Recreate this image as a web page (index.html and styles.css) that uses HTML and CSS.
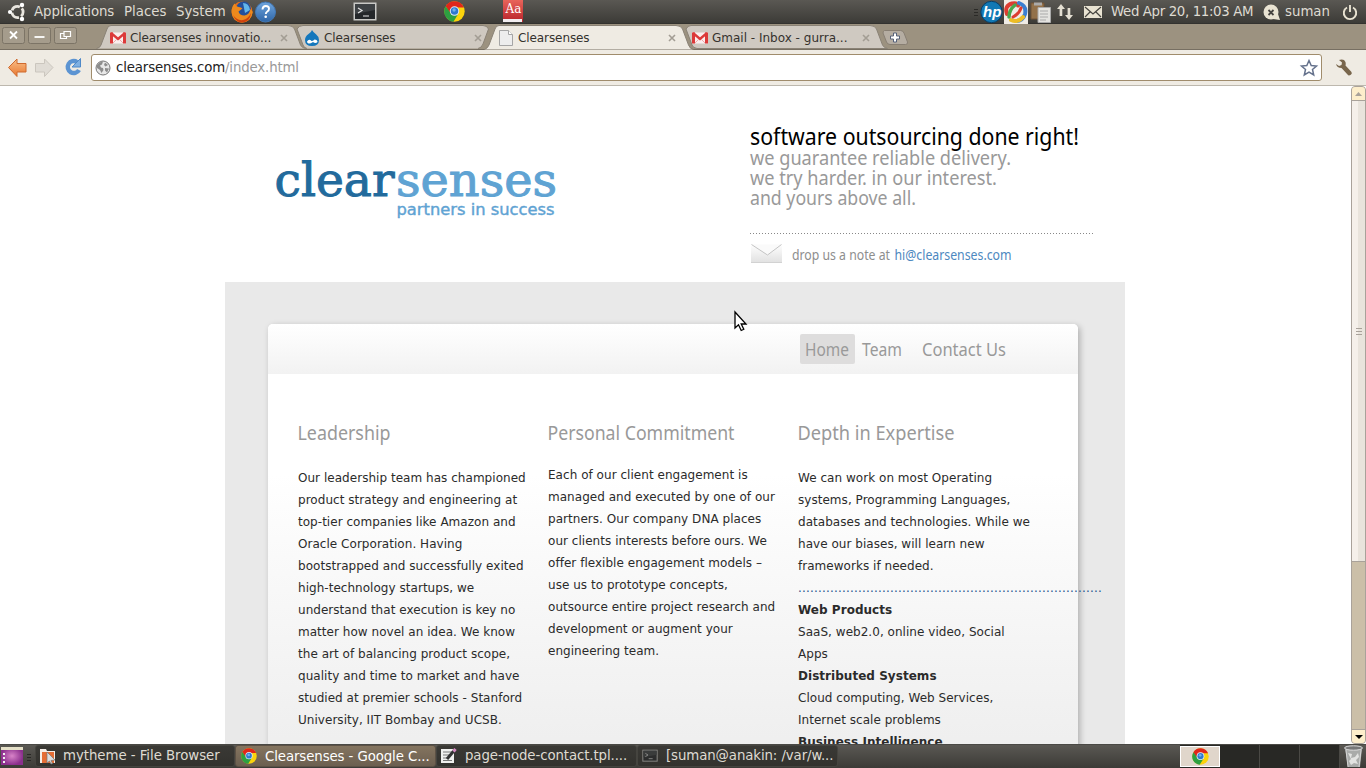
FILE: index.html
```html
<!DOCTYPE html>
<html lang="en">
<head>
<meta charset="utf-8">
<title>Clearsenses</title>
<link rel="stylesheet" href="styles.css">
</head>
<body>
<svg class="defs" width="0" height="0">
  <defs>
    <linearGradient id="or" x1="0" y1="0" x2="0" y2="1"><stop offset="0" stop-color="#f9c08a"/><stop offset="1" stop-color="#e8772e"/></linearGradient>
    <linearGradient id="bl" x1="0" y1="0" x2="0" y2="1"><stop offset="0" stop-color="#6fa5dd"/><stop offset="1" stop-color="#2f66a8"/></linearGradient>
    <linearGradient id="rd" x1="0" y1="0" x2="0" y2="1"><stop offset="0" stop-color="#e8645a"/><stop offset="1" stop-color="#b8232b"/></linearGradient>
    <linearGradient id="env" x1="0" y1="0" x2="0" y2="1"><stop offset="0" stop-color="#fff"/><stop offset="1" stop-color="#e2e2e2"/></linearGradient>
    <radialGradient id="pu"><stop offset="0" stop-color="#d883c8"/><stop offset="1" stop-color="#8b2f8d"/></radialGradient>
    <symbol id="chrome" viewBox="0 0 20 20">
      <circle cx="10" cy="10" r="9.7" fill="#fbd30c"/>
      <path d="M1.6 5A9.7 9.7 0 0 1 18.9 6.2H10L5.800 12z" fill="#e0261b"/>
      <path d="M1.600 5A9.700 9.700 0 0 0 9 19.700L13.500 12.500 6 11z" fill="#2da041"/>
      <circle cx="10" cy="9.600" r="4.500" fill="#e9eef5"/><circle cx="10" cy="9.600" r="3.600" fill="#2f78cf"/><circle cx="9.600" cy="8.600" r="1.600" fill="#6fb0ee"/>
    </symbol>
    <symbol id="gmail" viewBox="0 0 16 12">
      <path d="M0 .5h16v11H0z" fill="#fbeeee"/><path d="M0 .5h3v11H0zM13 .5h3v11h-3z" fill="#dc3a3a"/>
      <path d="M1 1l7 6 7-6" fill="none" stroke="#dc3a3a" stroke-width="2.400"/><path d="M3 11l4-4M13 11L9 7" stroke="#eaa" fill="none"/>
    </symbol>
    <symbol id="x" viewBox="0 0 8 8"><path d="M1 1l6 6M7 1L1 7" stroke="#a39d94" stroke-width="1.600" fill="none"/></symbol>
    <symbol id="term" viewBox="0 0 24 20">
      <path d="M.5.500h23v18H.5z" fill="#c9c9c6"/><path d="M2 2h20v15H2z" fill="#24272a"/><path d="M2 2h20v6L2 12z" fill="#3d4144"/>
      <path d="M5 6l4 2.500L5 11M10 14h6" fill="none" stroke="#e5e5e5" stroke-width="1.200"/>
    </symbol>
  </defs>
</svg>

<div class="desktop">
  <div class="panel">
    <svg class="ico" width="34" height="24" viewBox="0 0 34 24">
      <circle cx="17.500" cy="12" r="5.600" fill="none" stroke="#e9e6df" stroke-width="2.800" stroke-dasharray="9.400 2.330" stroke-dashoffset="4.700"/>
      <circle cx="10" cy="12" r="2.100" fill="#fff"/><circle cx="22" cy="5" r="2.200" fill="#fff"/><circle cx="22" cy="19" r="2.200" fill="#fff"/>
    </svg>
    <span class="menu m1">Applications</span><span class="menu m2">Places</span><span class="menu m3">System</span>
    <svg class="ico launch" width="48" height="24" viewBox="0 0 48 24">
      <circle cx="12" cy="12" r="10.500" fill="#e4701a"/><circle cx="13.500" cy="9" r="7.500" fill="#244f9a"/><path d="M13 3q6 0 7 7l-5 3z" fill="#62b6ea"/>
      <path d="M1.500 10Q2 6 4.500 3.500q1 3 4 3.500 3 0 4 1.500l-4 3q1 4 6 4 5-1 6-6.500l2.300 3Q21 22 12 22.600 2 22 1.500 10z" fill="#ee8a1d"/><path d="M3 15q4 6 10 5 5-1 8-7-1 9-9 9.500-6 0-9-7.500z" fill="#cf4210"/>
      <circle cx="35.500" cy="12" r="10" fill="url(#bl)" stroke="#4278b5"/><path d="M32.500 9.500q0-3.500 3.300-3.500 3.200 0 3.200 2.800 0 1.700-1.700 2.700-1.500.9-1.500 2.500" fill="none" stroke="#fff" stroke-width="1.900"/><circle cx="35.700" cy="16.800" r="1.300" fill="#fff"/>
    </svg>
    <svg class="ico l2" width="24" height="20"><use href="#term"/></svg>
    <svg class="ico l3" width="21" height="21"><use href="#chrome"/></svg>
    <svg class="ico l4" width="22" height="24" viewBox="0 0 22 24"><path d="M1 0h20v22H1z" fill="url(#rd)"/><path d="M1 19h19v3H1z" fill="#f3eef0"/><text x="3.500" y="13" class="aa">Aa</text></svg>
    <svg class="ico tray" width="144" height="24" viewBox="0 0 144 24">
      <path d="M1 9.500h4M1 12.500h4M1 15.500h4" stroke="#2b2a27"/>
      <circle cx="18.500" cy="12" r="10.700" fill="#1279b5" stroke="#093f68"/><text x="10" y="17" class="hp">hp</text>
      <path d="M31 0h24v24H31z" fill="#f0ece5"/>
      <g fill="none" stroke-linecap="round"><path d="M34 14Q31 6 39 3.500q5-1 6 2" stroke="#dc3d31" stroke-width="4"/><path d="M46 3q8 3 6 11-2 7-9 7" stroke="#3b7fd1" stroke-width="4"/><path d="M50 17q-5 6-12 3" stroke="#edbd26" stroke-width="4"/><path d="M36 17q0-7 6-12" stroke="#4aa74c" stroke-width="3.500"/><path d="M40 17q6-3 8-9" stroke="#dc3d31" stroke-width="3"/></g>
      <path d="M58 3h13v16H58z" fill="#93714a" stroke="#6f5336"/><path d="M61 2.500h8v3h-8z" fill="#aaa"/><path d="M65 7.500h12.500v15H65z" fill="#e4e3e0" stroke="#aaa"/><path d="M67 11h8M67 14h8M67 17h8M67 20h6" stroke="#aaa"/>
      <path d="M84 9l4-5 4 5h-2.700v7h-2.700V9zM92 15l4 5 4-5h-2.700V8h-2.700v7z" fill="#e4dfd2"/>
      <path d="M111 6h18v12h-18z" fill="#e9e3d2"/><path d="M112 7l8 7 8-7M112 17l5-5M128 17l-5-5" fill="none" stroke="#46443f" stroke-width="1.200"/>
    </svg>
    <span class="menu clock">Wed Apr 20, 11:03 AM</span>
    <svg class="ico" width="18" height="18" viewBox="0 0 18 18"><circle cx="8" cy="9" r="7.500" fill="#e9e3d2"/><path d="M10 16l7 1-2-6z" fill="#e9e3d2"/><path d="M5.500 7l5 5M10.500 7l-5 5" stroke="#45433f" stroke-width="1.800"/></svg>
    <span class="menu user">suman</span>
    <svg class="ico power" width="16" height="18" viewBox="0 0 16 18"><path d="M5 4.500a6.200 6.200 0 1 0 6 0M8 2v7" fill="none" stroke="#e9e3d2" stroke-width="1.900"/></svg>
  </div>

  <div class="tabs">
    <div class="wins">
      <svg width="23" height="17"><rect class="wb" x=".5" y=".5" width="22" height="16" rx="2"/><path d="M8 4.500l7 7M15 4.500l-7 7" class="wi"/></svg>
      <svg width="23" height="17"><rect class="wb" x=".5" y=".5" width="22" height="16" rx="2"/><path d="M6.500 10h10" class="wi"/></svg>
      <svg width="23" height="17"><rect class="wb" x=".5" y=".5" width="22" height="16" rx="2"/><path d="M10 4.500h6.500v5H10zM10 6.500H6.500v5h6v-2" class="wi thin"/></svg>
    </div>
    <div class="tab t1"><svg class="bg" width="206" height="25"><path d="M.5 24.500Q4 24 5 21L11 5Q12 1.500 15 1.500H192Q197 1.500 198.500 5l6 16q1.500 3 5 3.500"/></svg>
      <svg width="16" height="12"><use href="#gmail"/></svg><span>Clearsenses innovatio...</span><svg class="cl" width="8" height="8"><use href="#x"/></svg></div>
    <div class="tab t2"><svg class="bg" width="206" height="25"><path d="M17 24.500Q14 24 13 21L7 5Q9 1.500 13 1.500H193Q197 1.500 198.500 5L193 20q-1.500 4-5 4.500"/></svg>
      <svg width="16" height="16" viewBox="0 0 16 16"><path d="M8 0q1 2 4 4.200 3 2.300 3 5.800 0 6-7 6t-7-6q0-3.500 3.500-6Q7.500 2 8 0z" fill="#1477bc"/><path d="M3 11.500q2-3 4.500-.5 1.500 0 3-1.500 3 0 3 2.500-2 2-4.500 0-3 2-4.500 1.500Q3 13 3 11.500z" fill="#fff"/></svg><span>Clearsenses</span><svg class="cl" width="8" height="8"><use href="#x"/></svg></div>
    <div class="tab t3 on"><svg class="bg" width="206" height="26"><path d="M.5 25.500Q4 24 5 21L11 5Q12 1.500 15 1.500H192Q197 1.500 198.500 5l6 16q1.500 4 5 4.500"/></svg>
      <svg width="16" height="16" viewBox="0 0 16 16"><path d="M1.500.5h9l4 4v11h-13z" fill="#ededed" stroke="#a5a5a5"/><path d="M10.500.5v4h4" fill="#fff" stroke="#a5a5a5"/></svg><span>Clearsenses</span><svg class="cl" width="8" height="8"><use href="#x"/></svg></div>
    <div class="tab t4"><svg class="bg" width="206" height="25"><path d="M19 24.500Q15 24 14 21L8 5Q10 1.500 13 1.500H192Q197 1.500 198.500 5l6 16q1.500 3 5 3.500z"/></svg>
      <svg width="16" height="12"><use href="#gmail"/></svg><span>Gmail - Inbox - gurra...</span><svg class="cl" width="8" height="8"><use href="#x"/></svg></div>
    <svg class="plus" width="28" height="17" viewBox="0 0 28 17"><path d="M3.500 1.500h16q2.500 0 3.500 2.500l3.500 9q.5 2.500-2 2.500H9q-2.500 0-3.500-2.500l-3.500-9q0-2 1.500-2.500z" fill="#b5ada2" stroke="#887f73"/><path d="M12.500 4h3v3h3v3h-3v3h-3v-3h-3V7h3z" fill="#fff" stroke="#56627a"/></svg>
  </div>

  <div class="toolbar">
    <svg width="84" height="24" viewBox="0 0 84 24">
      <path d="M.5 11.500L9 3v4.500h9V16H9v4.500z" fill="url(#or)" stroke="#cf6a2e"/>
      <path d="M45 11.500L36.500 3v4.500h-9V16h9v4.500z" fill="#e0dcd5" stroke="#cbc6be"/>
      <path d="M69 6A6 6 0 1 0 71 14" fill="none" stroke="#5c94d2" stroke-width="4.400"/><path d="M72.500 2.500v8.500H64z" fill="#7fb0e2" stroke="#4f89c8"/>
    </svg>
    <div class="url">
      <svg width="16" height="16" viewBox="0 0 16 16"><circle cx="8" cy="8" r="7" fill="#e8e8e8" stroke="#777"/><path d="M2 5q3-4 6-3.500l-1 3-2 1 1 2 2 .5.500 2-2 3-1.500-3L2 8zM10 2.500l3 2.500-2.500 1.500L9 5zM10 8l4 .5-2 4-2-2z" fill="#8d8d8d"/></svg>
      <span class="addr">clearsenses.com<i>/index.html</i></span>
      <svg class="star" width="18" height="18" viewBox="0 0 18 18"><path d="M9 1.500l2.200 5 5.300.5-4 3.500 1.200 5.500L9 13.200 4.300 16l1.200-5.500L1.500 7l5.300-.5z" fill="#fff" stroke="#65728c" stroke-width="1.500"/></svg>
    </div>
    <svg class="wrench" width="18" height="18" viewBox="0 0 18 18"><path d="M4 1q5-1.500 6.500 2 .5 2 0 3.500l6 6.500q1 2-1 3t-3-.5l-6-6.500Q2 9 1 5l3 2 2.500-1 .500-2.500z" fill="#79664c"/></svg>
  </div>

  <div class="view">
    <div class="page">
      <header class="head">
        <svg class="logo" width="300" height="80">
          <text class="slab dark" x="-.5" y="46" textLength="120" lengthAdjust="spacingAndGlyphs">clear</text>
          <text class="slab lite" x="121" y="46" textLength="161" lengthAdjust="spacingAndGlyphs">senses</text>
          <text class="tag" x="121.500" y="65" textLength="158" lengthAdjust="spacingAndGlyphs">partners in success</text>
        </svg>
        <svg class="pitch" width="360" height="160">
          <text class="big" x="0" y="30" textLength="329" lengthAdjust="spacingAndGlyphs">software outsourcing done right!</text>
          <text class="mid" x="0" y="50" textLength="261" lengthAdjust="spacingAndGlyphs">we guarantee reliable delivery.</text>
          <text class="mid" x="0" y="70" textLength="247" lengthAdjust="spacingAndGlyphs">we try harder. in our interest.</text>
          <text class="mid" x="0" y="90" textLength="166" lengthAdjust="spacingAndGlyphs">and yours above all.</text>
          <path d="M0 118.500H343" stroke="#888" stroke-dasharray="1 2"/>
          <path d="M1 129h31v18H1z" fill="url(#env)"/><path d="M1.500 129.500l16 10.500 14-10.500" fill="#fafafa" stroke="#c4c4c4"/><path d="M1 147.500h31" stroke="#d2d2d2"/>
          <text class="small" x="42" y="144.500" textLength="98" lengthAdjust="spacingAndGlyphs">drop us a note at</text>
          <text class="small link" x="144.500" y="144.500" textLength="117" lengthAdjust="spacingAndGlyphs">hi@clearsenses.com</text>
        </svg>
      </header>
      <main class="stage">
        <div class="card">
          <nav class="nav">
            <span class="here"><svg width="44" height="30"><text class="nv" x="0" y="22" textLength="44" lengthAdjust="spacingAndGlyphs">Home</text></svg></span>
            <svg class="n2" width="40" height="30"><text class="nv" x="0" y="22" textLength="40" lengthAdjust="spacingAndGlyphs">Team</text></svg>
            <svg class="n3" width="84" height="30"><text class="nv" x="0" y="22" textLength="84" lengthAdjust="spacingAndGlyphs">Contact Us</text></svg>
          </nav>
          <div class="cols">
            <section class="col">
              <svg width="240" height="30"><text class="hd" x="-.5" y="20" textLength="93" lengthAdjust="spacingAndGlyphs">Leadership</text></svg>
              <p class="p1">Our leadership team has championed<br>product strategy and engineering at<br>top-tier companies like Amazon and<br>Oracle Corporation. Having<br>bootstrapped and successfully exited<br>high-technology startups, we<br>understand that execution is key no<br>matter how novel an idea. We know<br>the art of balancing product scope,<br>quality and time to market and have<br>studied at premier schools - Stanford<br>University, IIT Bombay and UCSB.</p>
            </section>
            <section class="col">
              <svg width="240" height="30"><text class="hd" x="-.5" y="20" textLength="187" lengthAdjust="spacingAndGlyphs">Personal Commitment</text></svg>
              <p class="p2">Each of our client engagement is<br>managed and executed by one of our<br>partners. Our company DNA places<br>our clients interests before ours. We<br>offer flexible engagement models –<br>use us to prototype concepts,<br>outsource entire project research and<br>development or augment your<br>engineering team.</p>
            </section>
            <section class="col">
              <svg width="240" height="30"><text class="hd" x="-.5" y="20" textLength="157" lengthAdjust="spacingAndGlyphs">Depth in Expertise</text></svg>
              <p class="p1">We can work on most Operating<br>systems, Programming Languages,<br>databases and technologies. While we<br>have our biases, will learn new<br>frameworks if needed.<br><span class="dots">............................................................................</span><br><b>Web Products</b><br>SaaS, web2.0, online video, Social<br>Apps<br><b>Distributed Systems</b><br>Cloud computing, Web Services,<br>Internet scale problems<br><b>Business Intelligence</b></p>
            </section>
          </div>
        </div>
      </main>
    </div>
    <div class="scroll">
      <div class="sb up"><svg width="7" height="4"><path d="M0 4L3.500 0 7 4z" fill="#a9a29a"/></svg></div>
      <div class="thumb"><i></i><i></i><i></i></div>
      <div class="track"></div>
      <div class="sb down"><svg width="8" height="4"><path d="M0 0h8L4 4z" fill="#000"/></svg></div>
    </div>
    <svg class="cursor" width="14" height="21" viewBox="0 0 14 21"><path d="M1 1v16l3.500-3.200 2.700 5.700 2.600-1.200L7.200 13H12z" fill="#fff" stroke="#000" stroke-width="1.300"/></svg>
  </div>

  <div class="taskbar">
    <svg width="35" height="24" viewBox="0 0 35 24"><path d="M1 2h22v18H1z" fill="url(#pu)"/><path d="M1 2h22v3H1z" fill="#e5e0c8"/><path d="M3 8h2v2H3zM3 12h2v2H3zM3 16h2v2H3z" fill="#eee"/><path d="M27 9.500h4M27 12.500h4M27 15.500h4" stroke="#292825"/></svg>
    <div class="task k1"><svg width="18" height="18" viewBox="0 0 18 18"><path d="M1 2h6l1 2h8v12H1z" fill="#f4ede7"/><path d="M3 5h12v11H3z" fill="#e56d35"/><path d="M8 5l8 8-4 .5 1.500 3-1.500.5-1.500-3L8 16z" fill="#ddd" stroke="#777" stroke-width=".7"/></svg><span>mytheme - File Browser</span></div>
    <div class="task k2 cur"><svg width="16" height="16"><use href="#chrome"/></svg><span>Clearsenses - Google C...</span></div>
    <div class="task k3"><svg width="17" height="18" viewBox="0 0 17 18"><path d="M1 2h13v14H1z" fill="#f0f0ee"/><path d="M3 5h9M3 8h9M3 11h6M3 13.500h9" stroke="#777"/><path d="M15 2.500L7 12" stroke="#333" stroke-width="3"/><path d="M15.500 2l-2 2.500" stroke="#d58bc0" stroke-width="3"/></svg><span>page-node-contact.tpl....</span></div>
    <div class="task k4"><svg class="dim" width="16" height="14"><use href="#term"/></svg><span>[suman@anakin: /var/w...</span></div>
    <div class="spaces"><div class="sp act"><svg width="17" height="17"><use href="#chrome"/></svg></div><div class="sp"></div><div class="sp"></div><div class="sp"></div></div>
    <svg width="26" height="24" viewBox="0 0 26 24"><path d="M5 3h17l-2 19H8z" fill="#a9aba9"/><ellipse cx="13.500" cy="3" rx="9" ry="2.200" fill="#777" stroke="#ddd"/><path d="M8 8l4 1-1 4 4-1 3-4 1 4-3 3 2 4-4-1-3 2-2-4 2-2z" fill="#e2e3e1"/><path d="M6 5l2 17M21 5l-2 17" stroke="#d5d5d5"/></svg>
  </div>
</div>
</body>
</html>
```
FILE: styles.css
```css
* { box-sizing: border-box; }
body { margin: 0; background: #fff; font-family: "DejaVu Sans", sans-serif; }
svg { display: block; flex: none; overflow: visible; }
.defs { position: absolute; }
.desktop { width: 1366px; height: 768px; display: flex; flex-direction: column; overflow: hidden; }

.panel { height: 24px; flex: none; display: flex; align-items: center; background: linear-gradient(#5a5853, #3c3b37); border-bottom: 1px solid #33322f; color: #dfdbd2; }
.menu { font-size: 13.33px; line-height: 22px; white-space: nowrap; flex: none; }
.m1 { width: 90px; letter-spacing: -.1px; }
.m2 { width: 52px; }
.m3 { width: 54px; }
.l2 { margin-left: 75px; }
.l3 { margin-left: 67px; }
.l4 { margin-left: 37px; }
.aa { font: 12px "DejaVu Serif", serif; fill: #fff; }
.hp { font: italic bold 15px "Liberation Sans", sans-serif; fill: #fff; }
.tray { margin-left: 449px; }
.clock { width: 152px; margin-left: -6px; letter-spacing: -.36px; }
.user { width: 56px; margin-left: 4px; }
.power { margin-left: 1px; }

.tabs { height: 26px; flex: none; display: flex; background: #9c9280; border-bottom: 1px solid #776f62; }
.wins { display: flex; gap: 3px; width: 96px; padding: 3px 0 0 2px; }
.wb { fill: #a59c8c; stroke: #7c7466; }
.wi { fill: none; stroke: #fff; stroke-width: 1.8; }
.thin { stroke-width: 1.2; }
.tab { position: relative; height: 25px; width: 194px; flex: none; display: flex; align-items: center; padding: 3px 0 0 14px; font-size: 12px; color: #35322e; white-space: nowrap; }
.tab > * { position: relative; }
.tab .bg { position: absolute; left: 0; top: 0; fill: #cfc9c1; stroke: #8a8276; }
.tab span { margin-left: 4px; flex: 1; }
.tab .cl { margin-right: 2px; }
.t2 { padding-left: 14px; }
.on { z-index: 2; }
.on .bg { fill: #efebe3; }
.t1 span, .t2 span, .t3 span { letter-spacing: -.09px; }
.plus { margin: 5px 0 0 9px; }

.toolbar { height: 36px; flex: none; display: flex; align-items: center; padding-left: 8px; background: #efebe3; border-bottom: 1px solid #bdb8ae; }
.url { display: flex; align-items: center; width: 1231px; height: 27px; margin-left: -1px; padding: 0 3px; background: #fff; border: 1px solid #a08c6c; border-radius: 3px; }
.addr { flex: 1; margin-left: 5px; font-size: 13.33px; letter-spacing: -.15px; color: #222; }
.addr i { font-style: normal; color: #999; }
.wrench { margin-left: 13px; }

.view { position: relative; height: 658px; flex: none; display: flex; overflow: hidden; }
.page { width: 1351px; padding-left: 225px; }
.head { width: 900px; height: 196px; display: flex; padding-top: 29px; }
.logo { margin: 35px 175px 0 50px; }
.slab { font: 46px "DejaVu Serif", serif; stroke-width: 1; }
.dark { fill: #226a9c; stroke: #226a9c; }
.lite { fill: #5fa3d3; stroke: #5fa3d3; }
.tag { font: 15.5px "DejaVu Sans", sans-serif; fill: #5fa3d3; stroke: #5fa3d3; stroke-width: .4; }
.big { font: 23px "Noto Sans", sans-serif; fill: #000; }
.mid { font: 19px "Noto Sans", sans-serif; fill: #999; }
.small { font: 14px "Noto Sans", sans-serif; fill: #8e8e8e; }
.link { fill: #4d88c0; }
.nv { font: 18.5px "Noto Sans", sans-serif; fill: #999; }
.hd { font: 20px "Noto Sans", sans-serif; fill: #999; }

.stage { width: 900px; height: 500px; padding: 42px 47px 0 43px; background: #e9e9e9; }
.card { width: 810px; height: 480px; border-radius: 5px 5px 0 0; background: #fff linear-gradient(#fff 150px, #eee 430px); box-shadow: 2px 2px 6px rgba(0, 0, 0, .25); }
.nav { height: 50px; display: flex; padding: 10px 0 0 532px; border-radius: 5px 5px 0 0; background: linear-gradient(#fff, #f2f2f2); }
.here { width: 55px; height: 30px; padding-left: 5px; background: #dedddd; border-radius: 2px; }
.n2 { margin-left: 7px; }
.n3 { margin-left: 20px; }
.cols { display: grid; grid-template-columns: 250px 250px 250px; padding: 46px 0 0 30px; }
.col p { margin: 0; font-size: 12px; line-height: 22px; letter-spacing: .035px; color: #2b2b2b; white-space: nowrap; }
.col .p1 { padding-top: 17px; }
.col .p2 { padding-top: 14px; }
.col .dots { color: #1f5590; letter-spacing: .186px; }

.scroll { width: 15px; height: 658px; display: flex; flex-direction: column; border: 1px solid #a9a29a; border-radius: 4px; background: #cbbfa8; }
.sb { height: 14px; flex: none; display: flex; align-items: center; justify-content: center; background: #fdeecb; border-radius: 3px 3px 0 0; }
.up { border-bottom: 1px solid #a9a29a; }
.down { border-top: 1px solid #a9a29a; border-radius: 0 0 3px 3px; }
.thumb { height: 461px; flex: none; display: flex; flex-direction: column; gap: 2px; align-items: center; justify-content: center; border-bottom: 1px solid #a9a29a; background: linear-gradient(90deg, #f5f0ea 50%, #e9e4dc 50%); }
.thumb i { width: 6px; height: 1px; background: #a9a29a; }
.track { flex: 1; }
.cursor { position: absolute; left: 734px; top: 225px; }

.taskbar { height: 24px; flex: none; display: flex; background: linear-gradient(#5a5853, #3c3b37); border-top: 1px solid #4a4945; color: #dfdbd2; font-size: 13.33px; }
.task { display: flex; align-items: center; height: 22px; border: 1px solid #45443f; border-radius: 3px; background: linear-gradient(#3a3935, #33322e); white-space: nowrap; letter-spacing: -.1px; padding-left: 3px; flex: none; }
.task span { margin-left: 6px; padding-bottom: 2px; }
.k1 { width: 200px; }
.k1 span { letter-spacing: -.05px; }
.k2 { width: 201px; padding-left: 5px; }
.k2 span { margin-left: 8px; padding-bottom: 0; }
.k3 { width: 201px; }
.k3 span { margin-left: 8px; }
.k4 { width: 201px; padding-left: 4px; }
.k4 span { margin-left: 8px; }
.cur { background: linear-gradient(#84745f, #6c5f50); color: #fff; border-color: #5c5145; }
.dim { opacity: .55; }
.spaces { display: flex; margin-left: 342px; height: 23px; background: #282825; }
.sp { width: 40px; border-right: 1px solid #4a4945; }
.act { display: flex; align-items: center; justify-content: center; background: #e0d6cb; border: 1px solid #fff; margin-top: 1px; height: 21px; }
```
